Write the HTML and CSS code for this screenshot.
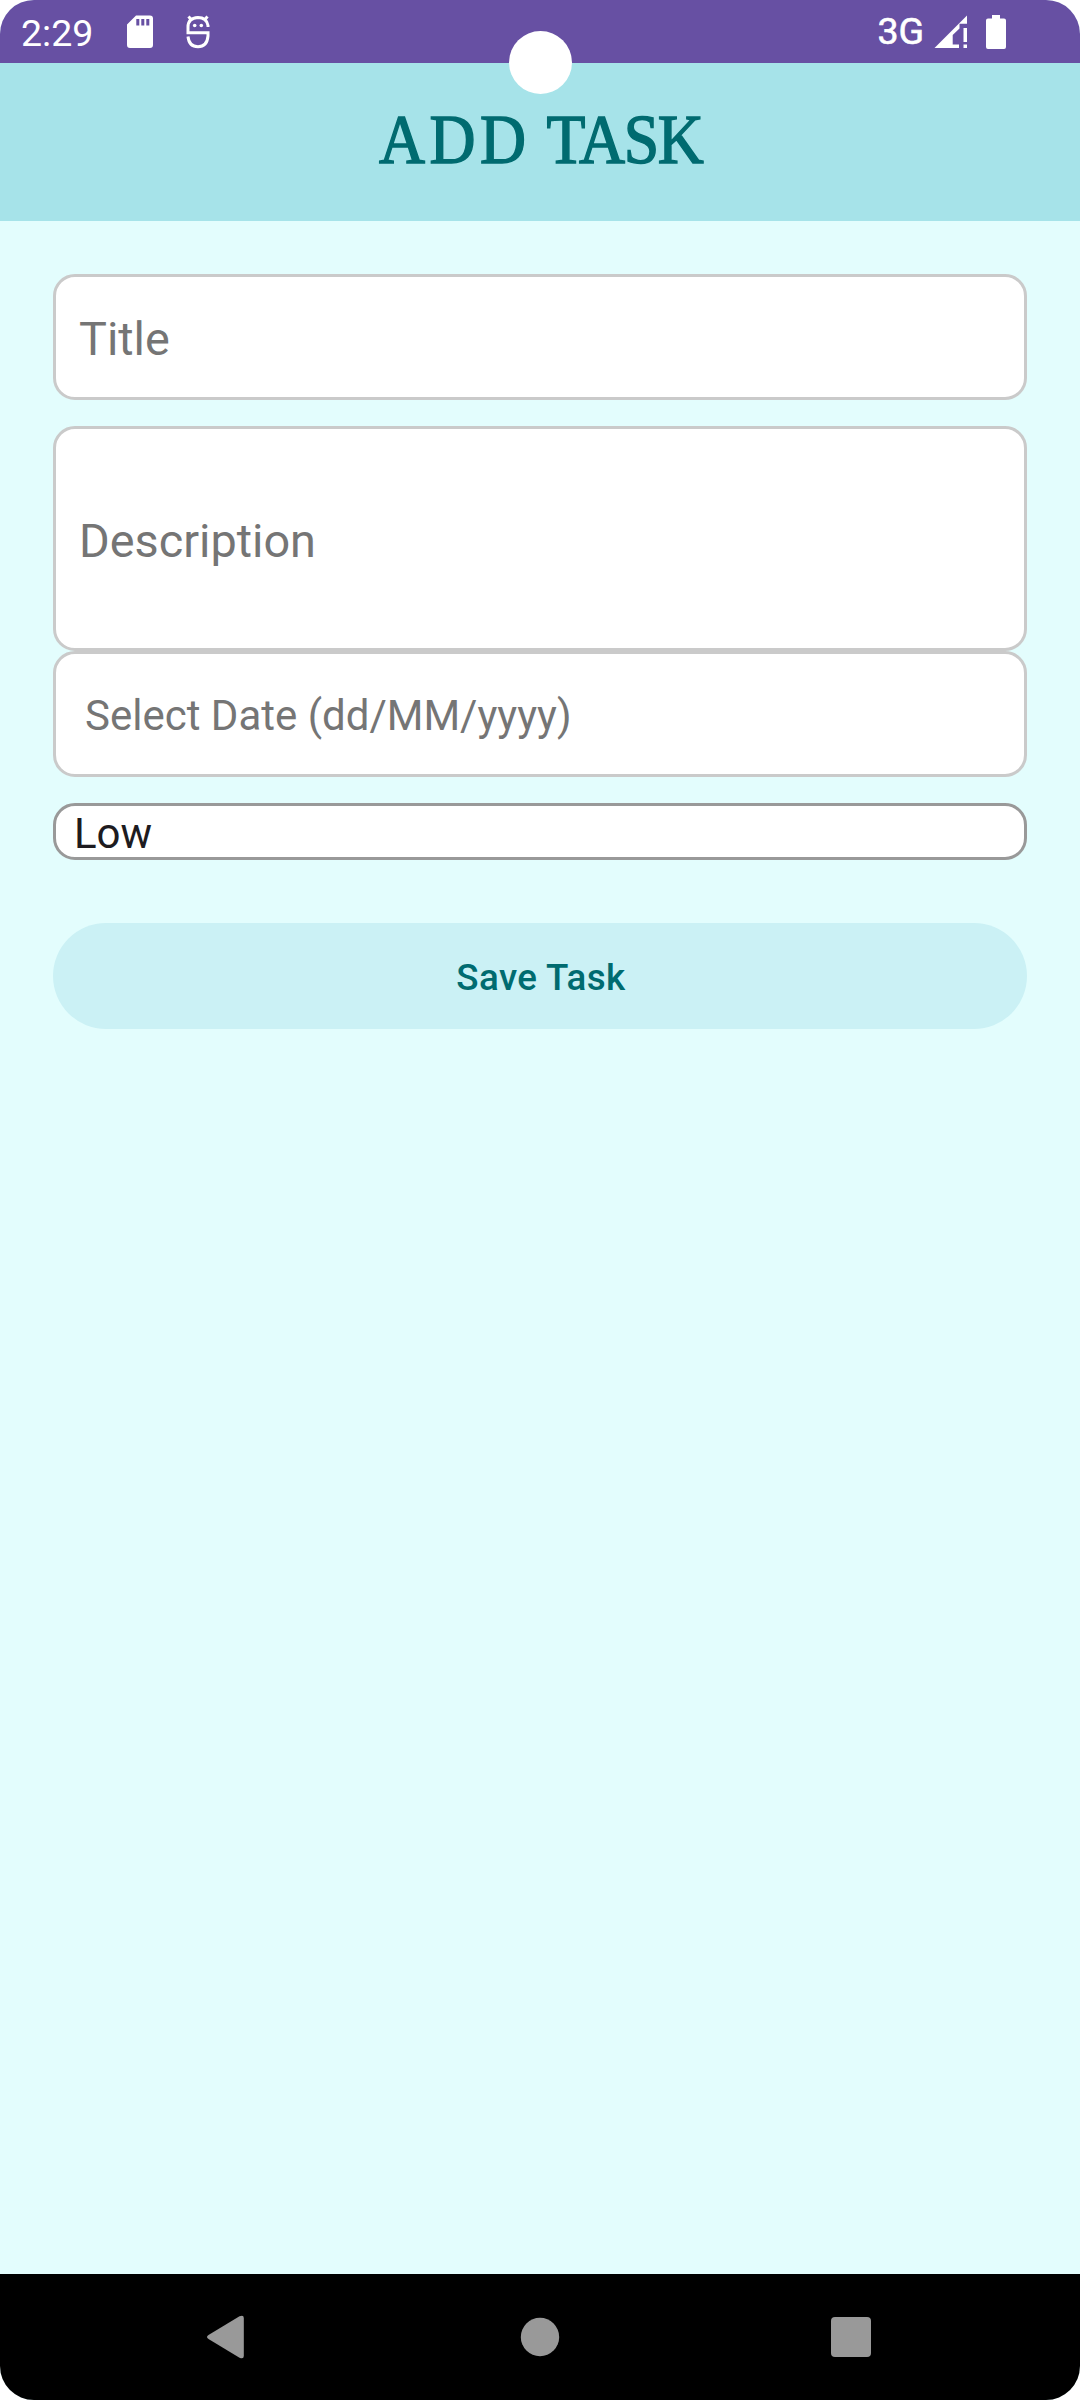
FILE: index.html
```html
<!DOCTYPE html>
<html lang="en">
<head>
<meta charset="utf-8">
<title>Add Task</title>
<link rel="stylesheet" href="styles.css">
</head>
<body>
<div class="screen">
  <div class="status">
    <span class="time">2:29</span>
    <svg class="sd" width="28" height="34" viewBox="0 0 28 34"><path fill="#fff" fill-rule="evenodd" d="M10 0.5H24Q27 0.5 27 3.500V30Q27 33 24 33H4Q1 33 1 30V9.500ZM10.300 4V10.500H13.300V4ZM15.300 4V10.500H18.300V4ZM20.300 4V10.500H23.300V4Z"/></svg>
    <svg class="bug" width="24" height="34" viewBox="0 0 24 34" fill="none" stroke="#fff" stroke-width="3"><path d="M22 12V10.500Q20.500 2.500 12 2.500Q2 3 2 12V17.700H22V21Q21 31.700 12 31.700Q3 31.700 2 21.500M2.500 1.500L5.500 5M21.500 1.500L18.500 5"/><circle cx="8.700" cy="10.500" r="1.800" fill="#fff" stroke="none"/><circle cx="15.300" cy="10.500" r="1.800" fill="#fff" stroke="none"/></svg>
    <span class="net">3G</span>
    <svg class="signal" width="34" height="34" viewBox="0 0 34 34" fill="#fff"><path d="M0.500 33L33 0.500V8.700H25.500V13.500L18.700 20V29.500H25V33Z"/><path d="M29.500 13H33V27H29.500ZM29.500 29.500H33V33H29.500Z"/></svg>
    <svg class="battery" width="20" height="34" viewBox="0 0 20 34"><path fill="#fff" d="M6 0H14V3.500H18Q20 3.500 20 5.500V32Q20 34 18 34H2Q0 34 0 32V5.500Q0 3.500 2 3.500H6Z"/></svg>
  </div>
  <div class="camera"></div>
  <header class="header"><h1 class="heading"><span class="wide">ADD</span> <span class="tight">TASK</span></h1></header>
  <main class="form">
    <div class="field title">Title</div>
    <div class="field description">Description</div>
    <div class="field date">Select Date (dd/MM/yyyy)</div>
    <div class="field priority">Low</div>
    <button class="save">Save Task</button>
  </main>
  <nav class="nav">
    <svg width="120" height="60" viewBox="0 0 120 60" fill="#999"><path d="M41.500 28L72.500 9.300Q76.800 7.500 76.800 11V49Q76.800 52.500 72.500 50.700L41.500 32Q38.500 30 41.500 28Z"/></svg>
    <svg width="120" height="60" viewBox="0 0 120 60" fill="#999"><circle cx="61" cy="30" r="19.200"/></svg>
    <svg width="120" height="60" viewBox="0 0 120 60" fill="#999"><rect x="40" y="10" width="40" height="40" rx="4"/></svg>
  </nav>
</div>
</body>
</html>
```
FILE: styles.css
```css
* { box-sizing: border-box; }
body {
  margin: 0;
  background: #fff;
  font-family: Roboto, "Liberation Sans", sans-serif;
}
.screen {
  position: relative;
  display: flex;
  flex-direction: column;
  width: 1080px;
  height: 2400px;
  overflow: hidden;
  border-radius: 34px;
  background: #e3fdfd;
}
.status {
  display: flex;
  align-items: center;
  height: 63px;
  padding: 0 74px 0 21px;
  background: #6750a3;
  color: #fff;
}
.time { width: 105px; padding-top: 2px; font-size: 37.500px; line-height: 44px; }
.sd { margin-right: 32px; }
.net {
  margin: 0 10px 0 auto;
  padding-bottom: 2px;
  font-size: 37.500px;
  line-height: 44px;
  -webkit-text-stroke: .6px #fff;
}
.signal { margin-right: 18px; }
.camera {
  position: absolute;
  left: 509px;
  top: 31px;
  width: 63px;
  height: 63px;
  border-radius: 50%;
  background: #fff;
}
.header {
  display: flex;
  justify-content: center;
  height: 158px;
  padding: 37px 0 0 2px;
  background: #a6e3e9;
}
.heading {
  margin: 0;
  color: #006b70;
  font: 400 70px/80px "Liberation Serif", serif;
  white-space: nowrap;
  transform: scaleX(.91);
  -webkit-text-stroke: 1.500px #006b70;
}
.wide { letter-spacing: 5px; }
.tight { letter-spacing: -1.500px; }
.form {
  display: flex;
  flex: 1;
  flex-direction: column;
  padding: 53px 53px 0;
}
.field {
  display: flex;
  align-items: center;
  border: 3px solid #cacaca;
  border-radius: 22px;
  background: #fff;
  color: #757575;
  font-size: 42px;
}
.title { height: 126px; margin-bottom: 26px; padding: 4px 0 0 23px; font-size: 46.800px; }
.description { height: 225px; padding: 4px 0 0 23px; font-size: 46.800px; }
.date { height: 126px; margin-bottom: 26px; padding: 2px 0 0 29px; }
.priority {
  height: 57px;
  margin-bottom: 63px;
  padding: 3px 0 0 18px;
  border-color: #999;
  color: #1d1b20;
}
.save {
  height: 106px;
  padding: 3px 0 0 2px;
  border: 0;
  border-radius: 53px;
  background: #cbf1f5;
  color: #006b70;
  font: 500 36.750px Roboto, "Liberation Sans", sans-serif;
  letter-spacing: .4px;
}
.nav {
  display: flex;
  align-items: center;
  justify-content: space-between;
  height: 126px;
  padding: 0 169px 0 167px;
  background: #000;
}
```
